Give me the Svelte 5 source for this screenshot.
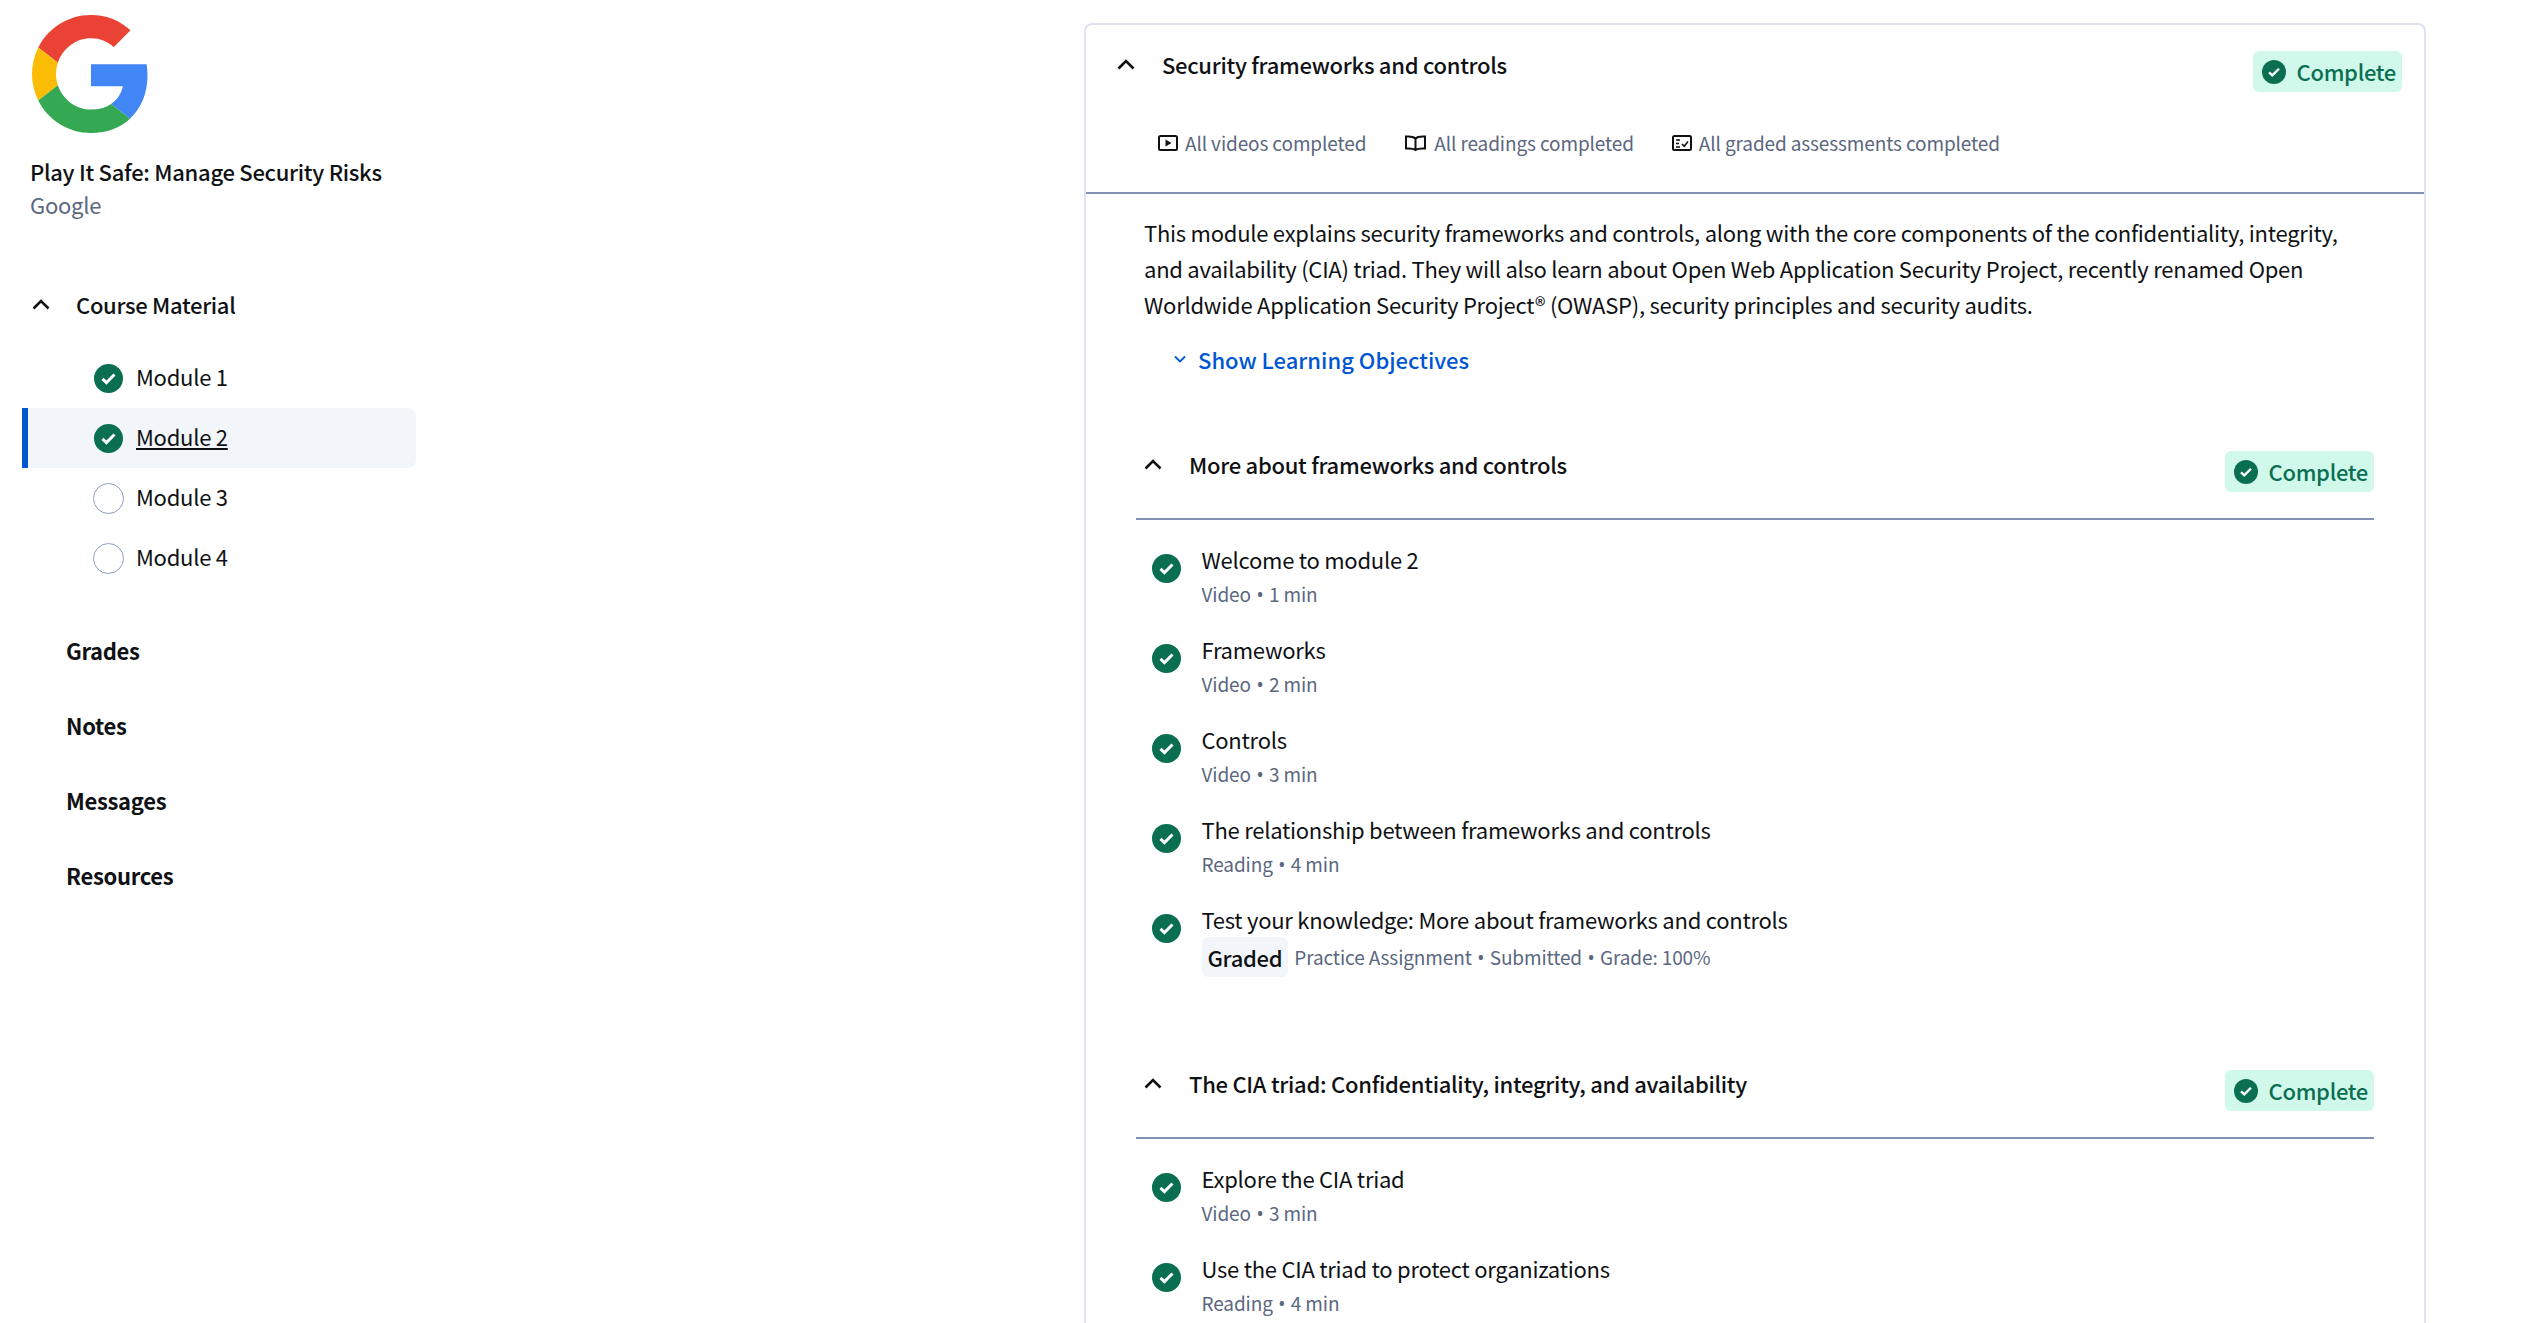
<script>
	const modules = [
		{ name: 'Module 1', done: true },
		{ name: 'Module 2', done: true, active: true },
		{ name: 'Module 3', done: false },
		{ name: 'Module 4', done: false }
	];
	const links = ['Grades', 'Notes', 'Messages', 'Resources'];
	const firstItems = [
		{ title: 'Welcome to module 2', meta: ['Video', '1 min'] },
		{ title: 'Frameworks', meta: ['Video', '2 min'] },
		{ title: 'Controls', meta: ['Video', '3 min'] },
		{ title: 'The relationship between frameworks and controls', meta: ['Reading', '4 min'] },
		{
			title: 'Test your knowledge: More about frameworks and controls',
			meta: ['Practice Assignment', 'Submitted', 'Grade: 100%'],
			graded: true
		}
	];
	const secondItems = [
		{ title: 'Explore the CIA triad', meta: ['Video', '3 min'] },
		{ title: 'Use the CIA triad to protect organizations', meta: ['Reading', '4 min'] }
	];
	const sections = [
		{ title: 'More about frameworks and controls', items: firstItems },
		{ title: 'The CIA triad: Confidentiality, integrity, and availability', items: secondItems }
	];
</script>

{#snippet check(size)}
	<svg class="check" width={size} height={size} viewBox="0 0 28 28">
		<circle cx="14" cy="14" r="14" fill="#0a6f50" />
		<path d="M8.2 14.4l3.8 3.6 7.800-7.800" fill="none" stroke="#fff" stroke-width="2.8" />
	</svg>
{/snippet}

{#snippet chevron()}
	<svg class="chevron" width="18" height="12" viewBox="0 0 18 12">
		<path d="M1.5 10.500L9 3l7.500 7.500" fill="none" stroke="#0f1114" stroke-width="2.6" />
	</svg>
{/snippet}

{#snippet complete()}
	<span class="chip">
		{@render check(24)}
		<span class="chip-label">Complete</span>
	</span>
{/snippet}

<div class="page">
	<aside class="sidebar">
		<svg class="logo" viewBox="0 0 48 48">
			<path fill="#ea4335" d="M24 9.5c3.54 0 6.71 1.22 9.21 3.6l6.85-6.85C35.9 2.38 30.47 0 24 0 14.62 0 6.51 5.38 2.56 13.22l7.98 6.19C12.43 13.72 17.74 9.5 24 9.5z" />
			<path fill="#4285f4" d="M46.98 24.55c0-1.57-.15-3.09-.38-4.55H24v9.02h12.94c-.58 2.96-2.26 5.48-4.78 7.18l7.73 6c4.51-4.18 7.09-10.36 7.09-17.65z" />
			<path fill="#fbbc05" d="M10.53 28.59c-.48-1.45-.76-2.99-.76-4.59s.27-3.14.76-4.59l-7.98-6.19C.92 16.46 0 20.12 0 24c0 3.88.92 7.54 2.56 10.78l7.97-6.19z" />
			<path fill="#34a853" d="M24 48c6.48 0 11.93-2.13 15.89-5.81l-7.73-6c-2.15 1.45-4.92 2.3-8.16 2.3-6.26 0-11.57-4.22-13.47-9.91l-7.98 6.19C6.51 42.62 14.62 48 24 48z" />
		</svg>
		<h1>Play It Safe: Manage Security Risks</h1>
		<p class="partner">Google</p>

		<div class="material">
			{@render chevron()}
			<span>Course Material</span>
		</div>

		<ul class="modules">
			{#each modules as mod}
				<li class={['module', mod.active && 'active']}>
					{#if mod.done}
						{@render check(29)}
					{:else}
						<span class="empty"></span>
					{/if}
					<span class="module-name"><span>{mod.name}</span></span>
				</li>
			{/each}
		</ul>

		<nav class="links">
			{#each links as link}
				<span>{link}</span>
			{/each}
		</nav>
	</aside>

	<main class="card">
		<header class="card-head">
			<div class="card-title">
				<div class="title-row">
					{@render chevron()}
					<h2>Security frameworks and controls</h2>
				</div>
				<div class="summary">
					<span class="summary-item">
						<svg width="20" height="18" viewBox="0 0 20 18">
							<rect x="1" y="2" width="18" height="14" rx="1.5" fill="none" stroke="#0f1114" stroke-width="2" />
							<path d="M7.500 5.500v7l6-3.500z" fill="#0f1114" />
						</svg>
						All videos completed
					</span>
					<span class="summary-item">
						<svg width="23" height="18" viewBox="0 0 22 18">
							<path d="M11 4.500C9 2.600 5.500 2.200 1.500 2.500v12c4-.3 7.500 0 9.500 1.500 2-1.500 5.500-1.800 9.500-1.500v-12C16.500 2.200 13 2.600 11 4.500zM11 4.500V16" fill="none" stroke="#0f1114" stroke-width="2" />
						</svg>
						All readings completed
					</span>
					<span class="summary-item">
						<svg width="20" height="18" viewBox="0 0 20 18">
							<rect x="1" y="2" width="18" height="14" rx="1.5" fill="none" stroke="#0f1114" stroke-width="2" />
							<path d="M4 6h4M4 9.500h3M4 13h4M10 10l2.200 2.200L16 7.500" fill="none" stroke="#0f1114" stroke-width="1.600" />
						</svg>
						All graded assessments completed
					</span>
				</div>
			</div>
			{@render complete()}
		</header>

		<div class="card-body">
			<p class="description">
				This module explains security frameworks and controls, along with the core components of the confidentiality, integrity, and availability (CIA) triad. They will also learn about Open Web Application Security Project, recently renamed Open Worldwide Application Security Project® (OWASP), security principles and security audits.
			</p>
			<div class="objectives">
				<svg width="12" height="8" viewBox="0 0 12 8">
					<path d="M1 1.500l5 5 5-5" fill="none" stroke="#0056d2" stroke-width="1.800" />
				</svg>
				Show Learning Objectives
			</div>

			{#each sections as section}
				<section class="section">
					<header class="section-head">
						{@render chevron()}
						<h3>{section.title}</h3>
						{@render complete()}
					</header>
					<ul class="items">
						{#each section.items as item}
							<li class="item">
								{@render check(29)}
								<div class="item-text">
									<div class="item-title">{item.title}</div>
									<div class={['item-meta', item.graded && 'has-graded']}>
										{#if item.graded}
											<span class="graded">Graded</span>
										{/if}
										<span>
											{#each item.meta as part, i}
												{#if i > 0}<span class="dot">•</span>{/if}{part}
											{/each}
										</span>
									</div>
								</div>
							</li>
						{/each}
					</ul>
				</section>
			{/each}
		</div>
	</main>
</div>

<style>
	:global(body) {
		margin: 0;
		background: #fff;
		overflow: hidden;
	}

	.page {
		display: grid;
		grid-template-columns: 1084px 1342px;
		height: 1323px;
		overflow: hidden;
		font-family: 'Noto Sans CJK SC', 'Noto Sans', sans-serif;
		font-size: 22px;
		letter-spacing: -0.25px;
		line-height: 36px;
		color: #0f1114;
	}

	ul {
		list-style: none;
		margin: 0;
		padding: 0;
	}

	h1,
	h2,
	h3,
	p {
		margin: 0;
	}

	h1,
	h2,
	h3 {
		font-size: 22px;
		font-weight: 500;
		letter-spacing: -0.28px;
		line-height: 36px;
	}

	.sidebar {
		padding: 15px 0 0 22px;
		width: 394px;
	}

	.logo {
		display: block;
		width: 118px;
		height: 118px;
		margin-left: 10px;
	}

	h1 {
		margin: 20px 0 0 8px;
		white-space: nowrap;
	}

	.partner {
		margin-left: 8px;
		line-height: 30px;
		color: #5b6780;
	}

	.material {
		display: flex;
		align-items: center;
		gap: 26px;
		margin: 67px 0 0 10px;
		font-weight: 500;
		letter-spacing: -0.31px;
	}

	.modules {
		margin-top: 26px;
	}

	.module {
		display: flex;
		align-items: center;
		gap: 13px;
		height: 60px;
		padding-left: 66px;
		box-sizing: border-box;
		border-left: 6px solid transparent;
		border-radius: 0 8px 8px 0;
	}

	.module-name {
		padding-bottom: 4px;
	}

	.active {
		border-left-color: #0056d2;
		background: #f2f5fa;
	}

	.active .module-name span {
		text-decoration: underline;
	}

	.empty {
		display: block;
		flex: none;
		width: 29px;
		height: 29px;
		border: 1px solid #8f9fc0;
		border-radius: 50%;
		margin: 0 -1px;
	}

	.links {
		display: flex;
		flex-direction: column;
		gap: 39px;
		margin: 44px 0 0 44px;
		font-weight: 700;
		letter-spacing: -0.31px;
		line-height: 36px;
	}

	.card {
		border: 2px solid #dfe3ef;
		border-bottom: 0;
		border-radius: 8px 8px 0 0;
		margin-top: 23px;
		box-sizing: border-box;
		height: 1400px;
	}

	.card-head {
		display: flex;
		justify-content: space-between;
		align-items: flex-start;
		height: 169px;
		padding: 21px 22px 0 31px;
		box-sizing: border-box;
		border-bottom: 2px solid #7f94b5;
	}

	.title-row {
		display: flex;
		align-items: center;
		gap: 27px;
	}

	.summary {
		display: flex;
		gap: 38px;
		margin: 43px 0 0 41px;
		font-size: 19px;
		letter-spacing: -0.12px;
		color: #5b6780;
	}

	.summary-item {
		display: flex;
		align-items: center;
		gap: 7px;
	}

	.chip {
		display: inline-flex;
		align-items: center;
		flex: none;
		gap: 10px;
		height: 41px;
		padding: 0 6px 0 9px;
		box-sizing: border-box;
		border-radius: 6px;
		background: #d0f9ec;
		color: #0a6f50;
		font-weight: 500;
		letter-spacing: -0.3px;
	}

	.chip-label {
		padding-bottom: 2px;
	}

	.card-head .chip {
		margin-top: 5px;
	}

	.card-body {
		padding: 20px 50px 0 58px;
	}

	.description {
		width: 1210px;
	}

	.objectives {
		display: flex;
		align-items: center;
		gap: 12px;
		margin: 19px 0 0 30px;
		font-weight: 500;
		letter-spacing: 0;
		color: #0056d2;
	}

	.section {
		margin: 69px 0 0 -8px;
	}

	.section + .section {
		margin-top: 74px;
	}

	.section-head {
		display: flex;
		align-items: flex-start;
		gap: 27px;
		height: 74px;
		padding: 0 0 0 8px;
		box-sizing: border-box;
		border-bottom: 2px solid #7f94b5;
	}

	.section-head .chevron {
		margin-top: 12px;
	}

	.section-head h3 {
		flex: 1;
	}

	.section-head .chip {
		margin-top: 5px;
	}

	.items {
		padding-top: 21px;
	}

	.item {
		display: flex;
		gap: 21px;
		height: 90px;
		padding-left: 15.5px;
	}

	.check {
		display: block;
		flex: none;
	}

	.item > .check {
		margin-top: 13px;
	}

	.item-meta {
		display: flex;
		align-items: center;
		gap: 6px;
		font-size: 19px;
		letter-spacing: -0.12px;
		line-height: 30px;
		margin-top: 2px;
		color: #5b6780;
	}

	.has-graded {
		margin-top: 0;
	}

	.dot {
		margin: 0 5.5px;
		font-family: 'Noto Sans', sans-serif;
	}

	.graded {
		padding: 0 6px;
		border-radius: 6px;
		background: #f2f5fa;
		color: #0f1114;
		font-size: 22px;
		font-weight: 500;
		letter-spacing: -0.31px;
		line-height: 40px;
	}
</style>
